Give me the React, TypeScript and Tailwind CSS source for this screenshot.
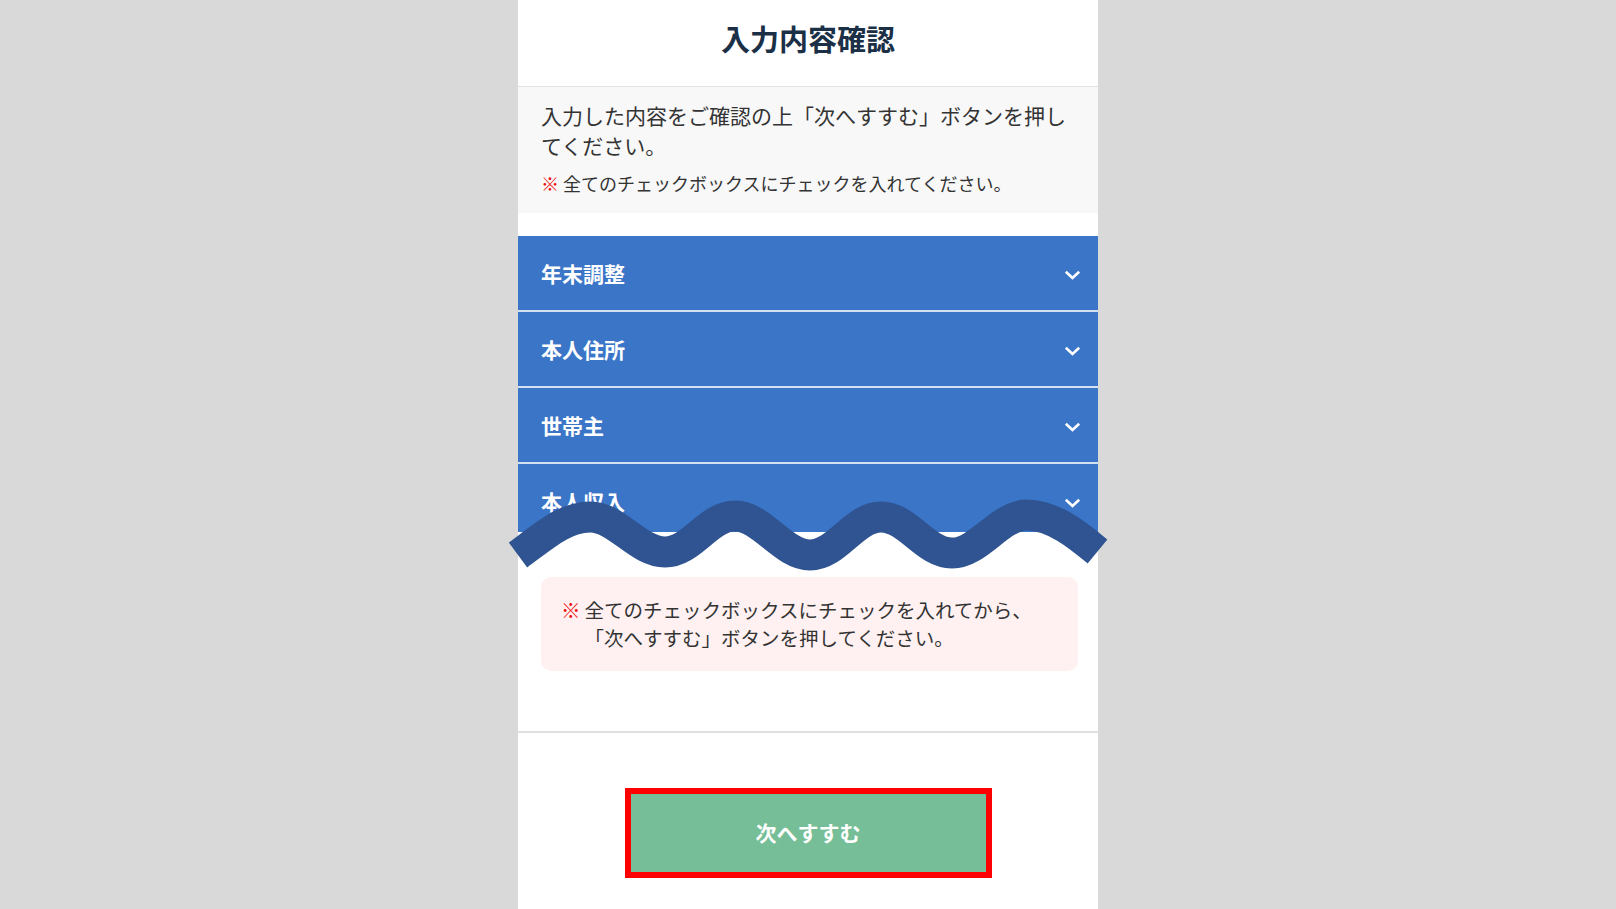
import React from 'react';

const sections = ['年末調整', '本人住所', '世帯主', '本人収入'];

const Chevron = () => (
  <svg className="mt-[4px]" width="17" height="10" viewBox="0 0 17 10" fill="none">
    <polyline points="1.8,1.8 8.5,8 15.2,1.8" stroke="#ffffff" strokeWidth="2.6" />
  </svg>
);

const Wave = () => (
  <svg
    className="absolute left-[-18px] top-[490px] pointer-events-none"
    width="620"
    height="90"
    viewBox="500 490 620 90"
    fill="none"
  >
    <path
      d="M518 555 C545 535 565 517 590 517 C617 517 638 552 665 552 C692 552 708 516 735 516 C762 516 783 555 810 555 C837 555 854 517 881 517 C908 517 925 553 952 553 C979 553 1000 515 1027 515 C1054 515 1080 537 1097.5 551.5"
      stroke="#2f5491"
      strokeWidth="31"
      strokeLinecap="butt"
    />
  </svg>
);

const App = () => {
  return (
    <div className="h-screen overflow-hidden bg-[#d9d9d9] font-['Noto_Sans_CJK_JP',sans-serif]">
      <div className="relative mx-auto w-[580px] min-h-full bg-white">
        <header className="flex h-[87px] items-center justify-center border-b-[1.5px] border-[#e2e2e2] pb-[8px]">
          <h1 className="text-[29px] font-bold text-[#1b3047]">入力内容確認</h1>
        </header>

        <div className="bg-[#f8f8f8] px-[23px] pt-[13px] pb-[17px] text-[#333333]">
          <p className="text-[21px] leading-[30px]">
            入力した内容をご確認の上「次へすすむ」ボタンを押してください。
          </p>
          <p className="mt-[10px] text-[18px] leading-[26px]">
            <span className="font-bold text-[#ee1111]">※</span> 全てのチェックボックスにチェックを入れてください。
          </p>
        </div>

        <div className="mt-[23px]">
          {sections.map((title, i) => (
            <div key={title}>
              {i > 0 && <div className="h-[2px] bg-[#d3e0f2]" />}
              <div className={'overflow-hidden ' + (i === sections.length - 1 ? 'h-[68px]' : 'h-[74px]')}>
                <div className="flex h-[74px] items-center justify-between bg-[#3b75c7] pl-[23px] pr-[17px]">
                  <span className="text-[21px] font-bold leading-[30px] text-white">{title}</span>
                  <Chevron />
                </div>
              </div>
            </div>
          ))}
        </div>

        <div className="ml-[23px] mr-[20px] mt-[45px] rounded-[10px] bg-[#fff1f1] px-[20px] py-[19px] text-[19.5px] leading-[28px] text-[#333333]">
          <div className="flex gap-[4px]">
            <span className="font-bold text-[#ee1111]">※</span>
            <span>
              全てのチェックボックスにチェックを入れてから、
              <br />
              「次へすすむ」ボタンを押してください。
            </span>
          </div>
        </div>

        <div className="mt-[60px] border-t-[2px] border-[#e0e0e0]" />

        <div className="flex justify-center pt-[55px] pb-[40px]">
          <button className="flex h-[90px] w-[367px] items-center justify-center border-[6px] border-[#ff0000] bg-[#76be98] text-[21px] font-bold text-white">
            次へすすむ
          </button>
        </div>

        <Wave />
      </div>
    </div>
  );
};

export default App;
